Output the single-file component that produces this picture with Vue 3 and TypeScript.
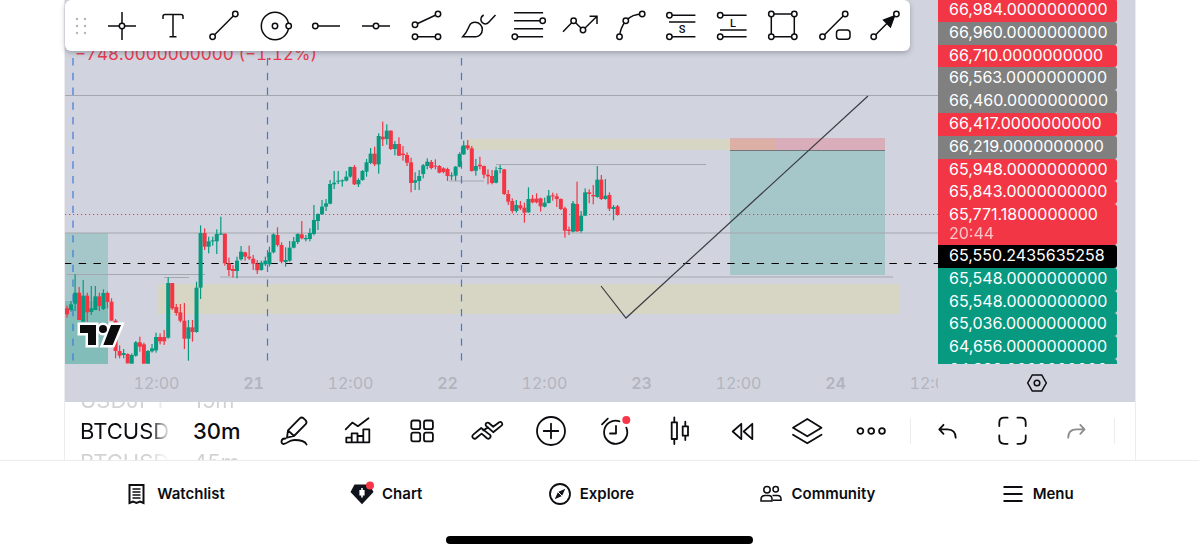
<script setup lang="ts">
interface Tool {
  name: string
  line: string
  nodes?: [number, number][]
  solid?: string
  letter?: { text: string; x: number; y: number }
}

interface Action {
  name: string
  line: string
  muted?: boolean
  badge?: boolean
}

type Row = [up: 0 | 1, high: number, low: number, top: number, bottom: number]

const tools: Tool[] = [
  { name: 'Cross', line: 'M3 17H31M17 3V31', nodes: [[17, 17]] },
  { name: 'Text', line: 'M7 10V7.5Q7 5.5 9 5.5H25Q27 5.5 27 7.5V10M17 5.5V27.7M13.5 27.7H20.5' },
  { name: 'Trend line', line: 'M5.6 27.7L28.3 5', nodes: [[5.6, 27.7], [28.3, 5]] },
  { name: 'Circle', line: 'M3.3 17a13.7 13.7 0 1 0 27.4 0a13.7 13.7 0 1 0 -27.4 0', nodes: [[17, 17], [30.7, 17]] },
  { name: 'Horizontal ray', line: 'M6.3 17H31', nodes: [[6.3, 17]] },
  { name: 'Horizontal line', line: 'M3 17H31', nodes: [[17, 17]] },
  { name: 'Disjoint channel', line: 'M5 15.7L28 5M5 27.7H28', nodes: [[5, 15.7], [28, 5], [5, 27.7], [28, 27.7]] },
  { name: 'Brush', line: 'M1.7 27.7C6 23.5 7 20 8.3 17C9.5 14.3 12 13.3 14 13.3C18.5 13.3 21.3 16.8 21.3 20.5C21.3 24.5 18.5 27.7 15 27.7ZM22.7 6C19 8 19.5 11.5 21 13.3C23 15.5 25.8 15.3 27.5 13.5L34.5 6' },
  { name: 'Fib retracement', line: 'M2.1 3.7H31.1M2.1 11.7H31.1M2.1 19.7H31.1M2.1 27.7H31.1', nodes: [[30.7, 11.7], [2.8, 27.7]] },
  { name: 'Path', line: 'M0 22.7L10.6 11.7L20 21L33.5 7.8M26.6 7.3H34V15', nodes: [[10.6, 11.7], [20, 21]] },
  { name: 'Curve', line: 'M5.5 27.7C6 21 8.5 16 11.8 11.7C16 7.5 22 5 28.2 5', nodes: [[5.5, 27.7], [11.8, 11.7], [28.2, 5]] },
  { name: 'Short position', line: 'M5.4 6.3H31.4M5 13H31.4M5.4 27.7H31.4', nodes: [[5.4, 6.3], [5.4, 27.7]], letter: { text: 'S', x: 18, y: 24 } },
  { name: 'Long position', line: 'M5.2 6.3H31.6M5 21H31.6M5.2 27.7H31.6', nodes: [[5.2, 6.3], [5.2, 27.7]], letter: { text: 'L', x: 18, y: 18 } },
  { name: 'Rectangle', line: 'M5.3 5H28.3V27.7H5.3Z', nodes: [[5.3, 5], [28.3, 5], [5.3, 27.7], [28.3, 27.7]] },
  { name: 'Line with label', line: 'M5.5 27.7L28.2 5M22.5 21H30Q33 21 33 24V27.3Q33 30.3 30 30.3H22.5Q19.5 30.3 19.5 27.3V24Q19.5 21 22.5 21Z', nodes: [[5.5, 27.7], [28.2, 5]] },
  { name: 'Arrow', line: 'M5.7 27.7L28.4 5', nodes: [[5.7, 27.7], [28.4, 5]], solid: 'M26.4 7L15.7 11L22.4 17.8Z' },
]

const actions: Action[] = [
  { name: 'Draw', line: 'M10 23.7L11 16.3L22.8 4.3Q24.6 2.7 26.6 4.3L28.7 6.3Q30.3 8.3 28.7 10.2L17 22ZM11 16.3L17 22M8.5 24.5C3.5 24.3 3.5 30 6.5 30C10.5 30 11 26 17.5 26C24 26 28 27 29.6 30.5' },
  { name: 'Indicators', line: 'M5.3 28.3V23.7H10.7V28.3ZM10.7 28.3V19.3H16.5V28.3ZM16.5 28.3V22H22.3V28.3ZM22.3 28.3V15.3H28.3V28.3ZM4.7 15.3L11.3 8.6L16.9 12.2L27.5 4.3' },
  { name: 'Layouts', line: 'M8.3 6.5H13.2Q15.2 6.5 15.2 8.5V13.2Q15.2 15.2 13.2 15.2H8.3Q6.3 15.2 6.3 13.2V8.5Q6.3 6.5 8.3 6.5ZM21 6.5H25.9Q27.9 6.5 27.9 8.5V13.2Q27.9 15.2 25.9 15.2H21Q19 15.2 19 13.2V8.5Q19 6.5 21 6.5ZM8.3 18.7H13.2Q15.2 18.7 15.2 20.7V25.4Q15.2 27.4 13.2 27.4H8.3Q6.3 27.4 6.3 25.4V20.7Q6.3 18.7 8.3 18.7ZM21 18.7H25.9Q27.9 18.7 27.9 20.7V25.4Q27.9 27.4 25.9 27.4H21Q19 27.4 19 25.4V20.7Q19 18.7 21 18.7Z' },
  { name: 'Patterns', line: 'M3.2 20.6L11.2 14L19.6 20.6A2.1 2.1 0 0 1 17 24.2L11.6 19.6L6 24.2A2.1 2.1 0 0 1 3.2 20.6ZM13.2 16.2L18.2 13.4M15.8 11.6A2.1 2.1 0 0 1 18.6 8.8L23.2 12.7L29.2 8.2A2.1 2.1 0 0 1 31.8 11.4L23.2 18.2Z' },
  { name: 'Add', line: 'M3 17a14 14 0 1 0 28 0a14 14 0 1 0 -28 0M17 9.7V24.3M9.7 17H24.3' },
  { name: 'Alerts', line: 'M21.5 7.3A11.6 11.6 0 1 0 28.3 13.6M18 12V19.5H12M4 10.3L9.8 4.7', badge: true },
  { name: 'Chart type', line: 'M9.7 8.3H15V25H9.7ZM12.3 3.3V8.3M12.3 25V30M20.7 12.3H26V21.7H20.7ZM23.3 7.7V12.3M23.3 21.7V26' },
  { name: 'Replay', line: 'M6.7 17.5L15.3 9.8V25.2ZM17.7 17.5L26.3 9.8V25.2Z' },
  { name: 'Object tree', line: 'M17.3 5L31.5 13.7L17.3 22.3L3 13.7ZM3 20.7L17.3 29.3L31.5 20.7' },
  { name: 'More', line: 'M3.5 17a2.9 2.9 0 1 0 5.8 0a2.9 2.9 0 1 0 -5.8 0M14.3 17a2.9 2.9 0 1 0 5.8 0a2.9 2.9 0 1 0 -5.8 0M25.1 17a2.9 2.9 0 1 0 5.8 0a2.9 2.9 0 1 0 -5.8 0' },
]

const historyActions: Action[] = [
  { name: 'Undo', line: 'M12.5 10.8L8.3 15.3L12.5 19.8M8.5 15.3H16.5C22 15.3 24.7 18.5 24.7 23.7' },
  { name: 'Fullscreen', line: 'M4.3 12V8.7Q4.3 3.7 9.3 3.7H12.6M22.4 3.7H25.7Q30.7 3.7 30.7 8.7V12M30.7 21.5V24.8Q30.7 29.8 25.7 29.8H22.4M12.6 29.8H9.3Q4.3 29.8 4.3 24.8V21.5' },
  { name: 'Redo', line: 'M21.3 10.8L25.5 15.3L21.3 19.8M25.3 15.3H17.5C12 15.3 9.2 18.5 9.2 23.7', muted: true },
]

const levels = [
  { price: '66,984.0000000000', tone: 'red' },
  { price: '66,960.0000000000', tone: 'gray' },
  { price: '66,710.0000000000', tone: 'red' },
  { price: '66,563.0000000000', tone: 'gray' },
  { price: '66,460.0000000000', tone: 'gray' },
  { price: '66,417.0000000000', tone: 'red' },
  { price: '66,219.0000000000', tone: 'gray' },
  { price: '65,948.0000000000', tone: 'red' },
  { price: '65,843.0000000000', tone: 'red' },
  { price: '65,771.1800000000', tone: 'red', countdown: '20:44' },
  { price: '65,550.2435635258', tone: 'black' },
  { price: '65,548.0000000000', tone: 'green' },
  { price: '65,548.0000000000', tone: 'green' },
  { price: '65,036.0000000000', tone: 'green' },
  { price: '64,656.0000000000', tone: 'green' },
  { price: '64,328.0000000000', tone: 'green' },
]

const times = ['12:00', '21', '12:00', '22', '12:00', '23', '12:00', '24', '12:00']
const dayLines = [73, 267.5, 461.5]

// Candle rows are stored per session, in thirds of a plot unit from the session base.
const sessions: { base: number; rows: Row[] }[] = [
  {
    base: 600,
    rows: [
      [0, 317, 353, 325, 343], [1, 303, 335, 313, 330], [1, 223, 333, 278, 311], [0, 261, 360, 278, 360],
      [1, 240, 365, 287, 365], [0, 278, 365, 287, 337], [1, 258, 345, 325, 336], [1, 258, 330, 289, 330],
      [0, 278, 333, 289, 318], [1, 268, 330, 279, 327], [0, 275, 325, 279, 306], [0, 295, 362, 305, 362],
      [0, 357, 475, 362, 453], [0, 436, 475, 453, 467], [1, 447, 475, 459, 465], [0, 460, 490, 462, 490],
      [1, 460, 491, 465, 491], [1, 423, 470, 427, 467], [0, 410, 455, 427, 440], [0, 428, 491, 433, 491],
      [1, 450, 491, 453, 491], [1, 432, 458, 445, 454], [1, 398, 458, 411, 451], [0, 400, 433, 411, 424],
      [0, 390, 435, 411, 424], [1, 232, 416, 249, 413], [0, 249, 330, 249, 325], [0, 312, 347, 321, 339],
      [0, 312, 367, 337, 362], [0, 309, 447, 362, 416], [1, 360, 482, 382, 416], [0, 360, 425, 382, 396],
      [1, 245, 398, 263, 396], [1, 76, 297, 99, 263], [0, 85, 150, 99, 140], [1, 110, 160, 124, 140],
      [1, 110, 137, 121, 124], [1, 88, 162, 102, 124], [1, 50, 105, 101, 104], [0, 101, 197, 101, 190],
      [0, 173, 228, 190, 210], [0, 195, 233, 207, 213], [1, 170, 235, 182, 213], [1, 138, 182, 155, 178],
      [0, 155, 182, 157, 170], [0, 137, 180, 170, 175], [0, 165, 210, 176, 191], [0, 180, 222, 191, 211],
    ],
  },
  {
    base: 330,
    rows: [
      [1, 452, 482, 458, 480], [1, 440, 468, 452, 463], [1, 410, 470, 427, 463], [1, 370, 430, 373, 427],
      [0, 352, 410, 375, 405], [0, 397, 460, 405, 455], [1, 412, 470, 450, 456], [1, 393, 455, 413, 452],
      [1, 381, 415, 394, 413], [1, 370, 402, 372, 396], [0, 333, 388, 373, 385], [1, 375, 394, 384, 388],
      [1, 355, 394, 369, 387], [1, 285, 376, 330, 372], [1, 310, 360, 312, 333], [1, 270, 315, 290, 313],
      [1, 267, 303, 280, 290], [1, 210, 283, 222, 281], [1, 183, 237, 218, 223], [1, 183, 222, 212, 215],
      [1, 208, 230, 211, 214], [1, 183, 214, 200, 212], [1, 170, 203, 171, 200], [0, 165, 225, 171, 223],
      [1, 205, 231, 210, 223], [1, 180, 212, 183, 210], [1, 147, 200, 157, 185], [1, 114, 162, 131, 159],
      [0, 110, 168, 131, 163], [1, 70, 191, 78, 163], [0, 35, 108, 80, 88], [1, 43, 104, 62, 87],
      [0, 61, 120, 62, 117], [1, 93, 136, 102, 117], [0, 82, 138, 102, 137], [0, 108, 152, 131, 135],
      [0, 127, 168, 135, 158], [0, 143, 247, 157, 219], [1, 187, 240, 211, 218], [1, 180, 240, 198, 213],
      [1, 162, 205, 166, 192], [1, 145, 178, 155, 168],
    ],
  },
  {
    base: 390,
    rows: [
      [0, 90, 118, 96, 114], [0, 88, 118, 107, 110], [0, 105, 130, 108, 128], [0, 112, 130, 115, 126],
      [0, 113, 153, 117, 138], [1, 127, 150, 136, 139], [1, 108, 152, 110, 137], [1, 67, 112, 72, 110],
      [1, 32, 75, 46, 73], [0, 30, 60, 46, 55], [0, 48, 125, 55, 123], [1, 87, 137, 108, 122],
      [0, 80, 118, 104, 109], [0, 107, 145, 108, 134], [0, 118, 163, 134, 139], [0, 120, 163, 138, 159],
      [1, 110, 160, 121, 158], [1, 105, 130, 114, 117], [0, 117, 195, 118, 192], [0, 180, 225, 192, 215],
      [0, 205, 250, 213, 243], [1, 210, 248, 225, 243], [0, 213, 240, 226, 235], [0, 218, 278, 233, 248],
      [1, 172, 248, 207, 247], [0, 195, 220, 206, 217], [0, 190, 220, 206, 217], [0, 203, 245, 205, 229],
      [1, 203, 232, 218, 230], [1, 180, 220, 197, 219], [0, 188, 212, 196, 199], [0, 190, 231, 199, 207],
      [0, 205, 240, 207, 237], [0, 230, 323, 235, 302], [0, 290, 315, 299, 303], [1, 213, 307, 220, 305],
      [0, 155, 306, 222, 304], [1, 243, 308, 257, 303], [1, 175, 258, 187, 257], [0, 178, 220, 187, 192],
      [0, 165, 223, 195, 199], [1, 108, 203, 149, 201], [0, 135, 210, 149, 207], [1, 147, 209, 197, 207],
      [0, 187, 243, 195, 236], [1, 225, 271, 231, 237], [0, 225, 257, 229, 255],
    ],
  },
]

const candles = sessions
  .flatMap(({ base, rows }) => rows.map(([up, ...ys]) => ({ up: up === 1, ys: ys.map((y) => (y + base) / 3) })))
  .map(({ up, ys: [high, low, top, bottom] }, i) => ({
    up,
    x: 67 + i * 4.048,
    high,
    low,
    top,
    body: Math.max(bottom - top, 1),
  }))
</script>

<template>
  <div class="app">
    <main class="workspace">
      <section class="chart">
        <svg class="plot" viewBox="65 0 873 364" preserveAspectRatio="xMinYMin slice" role="img" aria-label="BTCUSD 30 minute candles">
          <rect class="zone-teal" x="65" y="233" width="43" height="131" />
          <rect class="zone-teal" x="65" y="301" width="43" height="63" />
          <rect class="zone-sand" x="157" y="284" width="742" height="30" />
          <rect class="zone-sand" x="468" y="139" width="307" height="11" />
          <rect class="zone-pink" x="730" y="138" width="155" height="13" />
          <rect class="zone-teal" x="730" y="151" width="155" height="124" />
          <path class="level" d="M65 95.5H938M65 233H938M67 274.5H205M164 277.5H189M220 277H893M449 181H484M496 164.5H706" />
          <path class="entry" d="M730 150.5H885" />
          <line v-for="x in dayLines" :key="x" class="day" :x1="x" y1="-1" :x2="x" y2="364" />
          <line class="average" x1="64" y1="263.5" x2="938" y2="263.5" />
          <g v-for="c in candles" :key="c.x" :class="c.up ? 'up' : 'down'">
            <rect :x="c.x - 0.6" :y="c.high" width="1.2" :height="c.low - c.high" />
            <rect :x="c.x - 2" :y="c.top" width="4" :height="c.body" />
          </g>
          <line class="last" x1="65" y1="214.5" x2="938" y2="214.5" />
          <polyline class="forecast" points="601,286 626,318 868,96" />
          <g class="brand">
            <path d="M80 325H96V345H88V333H80ZM111 325H121L112.7 345H103.3Z" />
            <circle cx="103" cy="329" r="4" />
          </g>
          <g class="brand-mark">
            <path d="M80 325H96V345H88V333H80ZM111 325H121L112.7 345H103.3Z" />
            <circle cx="103" cy="329" r="4" />
          </g>
        </svg>

        <div class="price-axis">
          <ol class="prices">
            <li v-for="(l, i) in levels" :key="i" :class="['price', l.tone]">
              <span>{{ l.price }}</span>
              <small v-if="l.countdown">{{ l.countdown }}</small>
            </li>
          </ol>
        </div>

        <div class="time-axis">
          <span v-for="(t, i) in times" :key="i" :class="{ date: t.length === 2 }">{{ t }}</span>
        </div>
        <button class="axis-settings" type="button" aria-label="Chart settings">
          <svg viewBox="0 0 22 22" width="22" height="22">
            <path d="M6.3 3H15.7L20.3 11L15.7 19H6.3L1.7 11Z" />
            <circle cx="11" cy="11" r="2.8" />
          </svg>
        </button>

        <p class="change">−748.0000000000 (−1.12%)</p>

        <div class="draw-bar" role="toolbar" aria-label="Drawing tools">
          <svg class="grip" viewBox="0 0 12 18" width="12" height="18" aria-hidden="true">
            <g v-for="y in [2, 9, 16]" :key="y">
              <circle cx="2" :cy="y" r="1.2" />
              <circle cx="10" :cy="y" r="1.2" />
            </g>
          </svg>
          <button v-for="t in tools" :key="t.name" class="tool" type="button" :aria-label="t.name">
            <svg viewBox="0 0 34 34" width="34" height="34">
              <path :d="t.line" />
              <path v-if="t.solid" class="solid" :d="t.solid" />
              <circle v-for="(n, i) in t.nodes" :key="i" class="node" :cx="n[0]" :cy="n[1]" r="2.7" />
              <text v-if="t.letter" :x="t.letter.x" :y="t.letter.y" text-anchor="middle">{{ t.letter.text }}</text>
            </svg>
          </button>
        </div>
      </section>

      <section class="actions" role="toolbar" aria-label="Chart actions">
        <div class="wheel symbol">
          <button type="button" class="near">USDJPY</button>
          <button type="button">BTCUSD</button>
          <button type="button" class="near">BTCUSD</button>
        </div>
        <div class="wheel interval">
          <button type="button" class="near">15m</button>
          <button type="button">30m</button>
          <button type="button" class="near">45m</button>
        </div>
        <button v-for="a in actions" :key="a.name" class="action" type="button" :aria-label="a.name">
          <svg viewBox="0 0 34 34" width="34" height="34">
            <path :d="a.line" />
            <circle v-if="a.badge" class="badge" cx="28.3" cy="6" r="4" />
          </svg>
        </button>
        <span class="divider"></span>
        <button v-for="a in historyActions" :key="a.name" :class="['action', { muted: a.muted }]" type="button" :aria-label="a.name">
          <svg viewBox="0 0 34 34" width="34" height="34">
            <path :d="a.line" />
          </svg>
        </button>
        <span class="divider last-divider"></span>
      </section>
    </main>

    <nav class="tabs">
      <a href="#watchlist">
        <svg viewBox="0 0 24 24" width="24" height="24">
          <path d="M4.5 3H18.5V21L15 19.5L11.5 21L8 19.5L4.5 21Z" stroke-width="2" />
          <path d="M7.5 7H15.5M7.5 10H15.5M7.5 13H15.5M7.5 16H15.5" />
        </svg>
        Watchlist
      </a>
      <a href="#chart">
        <svg viewBox="0 0 24 24" width="24" height="24">
          <path class="ink" d="M4.5 2.5H19.5L23.5 10L12 22.3L.5 10Z" />
          <path class="paper" d="M11.2 6H12.8V8H14.6V13.5H12.8V15.5H11.2V13.5H9.4V8H11.2Z" />
          <circle class="badge" cx="20" cy="3.5" r="4" />
        </svg>
        Chart
      </a>
      <a href="#explore">
        <svg viewBox="0 0 24 24" width="24" height="24">
          <circle cx="12" cy="12" r="10" stroke-width="1.8" />
          <path class="ink" d="M17.3 6.7L14 14L6.7 17.3L10 10Z" />
          <path class="slit" d="M9.6 9.6L14.4 14.4" />
        </svg>
        Explore
      </a>
      <a href="#community">
        <svg viewBox="0 0 24 24" width="24" height="24" stroke-width="1.8">
          <circle cx="8" cy="7.7" r="3.2" />
          <circle cx="16.7" cy="7.2" r="2.7" />
          <path d="M2 19V17.5Q2 13.5 6 13.5H9.5Q13 13.5 13 17V19ZM13.5 13.5H18.5Q22 13.5 22 17V18.2H14" />
        </svg>
        Community
      </a>
      <a href="#menu">
        <svg viewBox="0 0 24 24" width="24" height="24">
          <path d="M2.5 5H21.5M2.5 12H21.5M2.5 19H21.5" stroke-width="1.8" />
        </svg>
        Menu
      </a>
    </nav>
    <div class="home-indicator"></div>
  </div>
</template>

<style>
body {
  margin: 0;
  background: #fff;
}
</style>

<style scoped>
.app {
  font-family: Inter, "Liberation Sans", sans-serif;
  color: #0c0d10;
  overflow: hidden;
}

button {
  margin: 0;
  padding: 0;
  border: 0;
  background: none;
  color: inherit;
  font: inherit;
}

svg {
  display: block;
  fill: none;
  stroke: currentColor;
  stroke-width: 1.5;
}

.workspace {
  margin: 0 63px 0 64px;
  border: solid #ececef;
  border-width: 0 1px;
}

.chart {
  position: relative;
  display: grid;
  grid-template-columns: minmax(0, 1fr) 179px;
  grid-template-rows: 364px 38px;
  padding-right: 18px;
  background: #d1d4de;
}

.plot {
  width: 100%;
  height: 100%;
  stroke: none;
}

.zone-teal { fill: rgba(8, 153, 129, 0.22); }
.zone-sand { fill: rgba(226, 218, 156, 0.38); }
.zone-pink { fill: rgba(242, 54, 69, 0.24); }
.level { stroke: #a5a7ae; stroke-width: 1; }
.entry { stroke: #70777b; stroke-width: 1; }
.day { stroke: #3f78e0; stroke-width: 1.2; stroke-dasharray: 7.38 7.38; }
.average { stroke: #000; stroke-width: 1.2; stroke-dasharray: 7.37 7.37; }
.last { stroke: #f23645; stroke-width: 1.1; stroke-dasharray: 1.2 2.8; }
.forecast { stroke: #3c3d42; stroke-width: 1.2; }
.up { fill: #089981; }
.down { fill: #f23645; }
.brand { fill: #fff; stroke: #fff; stroke-width: 5; }
.brand-mark { fill: #0c0c0c; }

.price-axis {
  overflow: hidden;
}

.prices {
  display: grid;
  grid-template-rows: repeat(9, minmax(0, 1fr)) 41px repeat(5, minmax(0, 1fr));
  grid-auto-rows: 0;
  height: 360px;
  margin: -1px 0 0;
  padding: 0;
  list-style: none;
}

.price {
  min-height: 22px;
  padding-left: 11px;
  border-radius: 0 3px 3px 0;
  color: #fff;
  font-size: 16px;
  line-height: 20px;
  white-space: nowrap;
}

.price small {
  display: block;
  font-size: 16px;
  line-height: 18px;
  opacity: 0.7;
}

.red { background: #f23645; }
.gray { background: #808080; }
.black { background: #000; }
.green { background: #089981; }

.time-axis {
  display: flex;
  align-items: center;
  padding-left: 43px;
  overflow: hidden;
  color: #b2b5be;
  font-size: 16px;
  font-variant-numeric: tabular-nums;
}

.time-axis span {
  flex: 0 0 97px;
  text-align: center;
}

.time-axis .date {
  font-weight: 600;
}

.axis-settings {
  display: flex;
  align-items: center;
  justify-content: center;
  padding-left: 18px;
}

.change {
  position: absolute;
  top: 44px;
  left: 10px;
  margin: 0;
  color: #e8394f;
  font-size: 17px;
  line-height: 20px;
  font-variant-numeric: tabular-nums;
}

.draw-bar {
  position: absolute;
  top: 0;
  left: 0;
  right: 225px;
  height: 51px;
  display: flex;
  align-items: center;
  border-radius: 6px;
  background: #fff;
  box-shadow: 0 2px 5px rgba(60, 64, 80, 0.35);
}

.grip {
  flex: none;
  margin: 0 10px;
  fill: #b5b5b8;
  stroke: none;
}

.tool,
.action {
  flex: 1 1 0;
  min-width: 0;
  display: flex;
  justify-content: center;
}

.tool svg,
.action svg {
  flex: none;
  overflow: visible;
}

.node { fill: #fff; }
.solid { fill: currentColor; }

.tool text {
  fill: currentColor;
  stroke: none;
  font-family: Roboto, sans-serif;
  font-size: 11px;
  font-weight: 500;
}

.actions {
  display: flex;
  align-items: center;
  height: 58px;
  overflow: hidden;
}

.action svg {
  stroke-width: 1.8;
  stroke-linejoin: round;
  stroke-linecap: round;
}

.muted {
  color: #8d8d90;
}

.badge {
  fill: #f7364a;
  stroke: none;
}

.divider {
  width: 1px;
  height: 26px;
  margin: 0 5px 0 6px;
  background: #ececef;
}

.last-divider {
  margin: 0 20px 0 6px;
}

.wheel {
  flex: none;
  display: flex;
  flex-direction: column;
  font-size: 22px;
  font-weight: 500;
  line-height: 31px;
}

.wheel button {
  text-align: left;
}

.wheel .near {
  opacity: 0.18;
  font-weight: 400;
}

.symbol {
  width: 90px;
  padding-left: 15px;
  margin-right: 23px;
  overflow: hidden;
  font-weight: 400;
  mask-image: linear-gradient(to right, #000 84px, transparent 106px);
}

.interval {
  width: 69px;
}

.tabs {
  display: flex;
  justify-content: space-evenly;
  padding: 21px 0 30px;
  border-top: 1px solid #ececef;
}

.tabs a {
  display: flex;
  align-items: center;
  gap: 8px;
  color: inherit;
  font-size: 15px;
  font-weight: 600;
  line-height: 24px;
  text-decoration: none;
}

.tabs svg {
  overflow: visible;
}

.ink { fill: #10131c; stroke: none; }
.paper { fill: #fff; stroke: none; }
.slit { stroke: #fff; stroke-width: 1; }

.home-indicator {
  width: 307px;
  height: 8px;
  margin: 0 auto 10px;
  border-radius: 4px;
  background: #000;
}
</style>
